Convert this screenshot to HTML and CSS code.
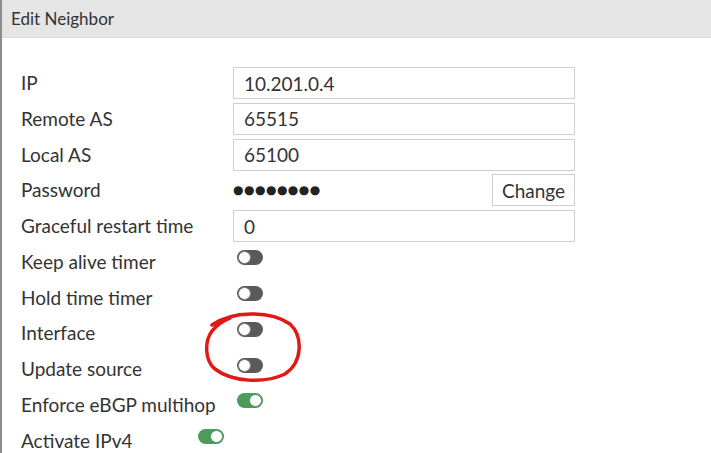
FILE: index.html
```html
<!DOCTYPE html>
<html lang="en">

<head>
    <meta charset="UTF-8">
    <title>Edit Neighbor</title>
    <link rel="stylesheet" href="styles.css">
</head>

<body>
    <div class="panel">
        <div class="panel-header">Edit Neighbor</div>

        <div class="panel-body">
            <div class="form-row">
                <label>IP</label>
                <input type="text" class="text-input" value="10.201.0.4">
            </div>
            <div class="form-row">
                <label>Remote AS</label>
                <input type="text" class="text-input" value="65515">
            </div>
            <div class="form-row">
                <label>Local AS</label>
                <input type="text" class="text-input" value="65100">
            </div>
            <div class="form-row">
                <label>Password</label>
                <div class="password-field">
                    <span class="dots">&#9679;&#9679;&#9679;&#9679;&#9679;&#9679;&#9679;&#9679;</span>
                    <button class="change-btn">Change</button>
                </div>
            </div>
            <div class="form-row">
                <label>Graceful restart time</label>
                <input type="text" class="text-input" value="0">
            </div>
            <div class="form-row">
                <label>Keep alive timer</label>
                <span class="toggle"></span>
            </div>
            <div class="form-row">
                <label>Hold time timer</label>
                <span class="toggle"></span>
            </div>
            <div class="form-row">
                <label>Interface</label>
                <span class="toggle"></span>
            </div>
            <div class="form-row">
                <label>Update source</label>
                <span class="toggle"></span>
            </div>
            <div class="form-row">
                <label>Enforce eBGP multihop</label>
                <span class="toggle on"></span>
            </div>
            <div class="form-row narrow">
                <label>Activate IPv4</label>
                <span class="toggle on"></span>
            </div>
        </div>

        <!-- red marker drawn over the screenshot -->
        <svg class="marker" width="711" height="453" viewBox="0 0 711 453">
            <path d="M212 325 C232 311 270 310 290 324 C303 336 303 362 285 374 C264 384 232 382 215 369 C205 361 204 342 212 331 C216 326 222 321 230 318"
                fill="none" stroke="#e01818" stroke-width="3.5" stroke-linecap="round" />
        </svg>
    </div>
</body>

</html>
```

FILE: styles.css
```css
body {
    margin: 0;
    padding: 0;
    font-family: Lato, "Open Sans", sans-serif;
    color: #333;
    background: white;
}

.panel {
    position: relative;
    height: 453px;
    border-left: 2px solid #8c8c8c;
    box-sizing: border-box;
    overflow: hidden;
}

.panel-header {
    height: 38px;
    background-color: #e5e5e5;
    border-bottom: 1px solid #dcdcdc;
    box-sizing: border-box;
    padding-left: 9px;
    line-height: 37px;
    font-size: 17px;
    color: #333;
}

.panel-body {
    padding: 29px 0 0 19px;
    display: flex;
    flex-direction: column;
    gap: 3.75px;
}

.form-row {
    display: grid;
    grid-template-columns: 212px auto;
    align-items: center;
    height: 32px;
    font-size: 19px;
}

.form-row label {
    padding-bottom: 1px;
}

.form-row.narrow {
    grid-template-columns: 173px auto;
}

.text-input {
    width: 342px;
    height: 32px;
    box-sizing: border-box;
    border: 1px solid #cfcfcf;
    padding: 0 10px;
    font-family: inherit;
    font-size: 19px;
    color: #333;
    outline: none;
}

.password-field {
    width: 342px;
    display: flex;
    justify-content: space-between;
    align-items: center;
}

.dots {
    font-size: 12px;
    letter-spacing: 0.5px;
    color: #222;
    font-family: "DejaVu Sans", sans-serif;
}

.change-btn {
    height: 32px;
    width: 83px;
    border: 1px solid #cfcfcf;
    background: white;
    font-family: inherit;
    font-size: 19px;
    color: #333;
    padding: 0;
}

.toggle {
    position: relative;
    display: block;
    width: 26px;
    height: 15px;
    margin: -8px 0 0 4px;
    border-radius: 8px;
    background-color: #5a5a5a;
}

.toggle::after {
    content: "";
    position: absolute;
    top: 1px;
    left: 1px;
    width: 11px;
    height: 11px;
    border-radius: 50%;
    background: white;
    border: 1px solid #777;
}

.toggle.on {
    background-color: #4e9a5c;
}

.toggle.on::after {
    left: auto;
    right: 1px;
    border-color: #4e9a5c;
}

.marker {
    position: absolute;
    top: 0;
    left: -2px;
    pointer-events: none;
}
```
